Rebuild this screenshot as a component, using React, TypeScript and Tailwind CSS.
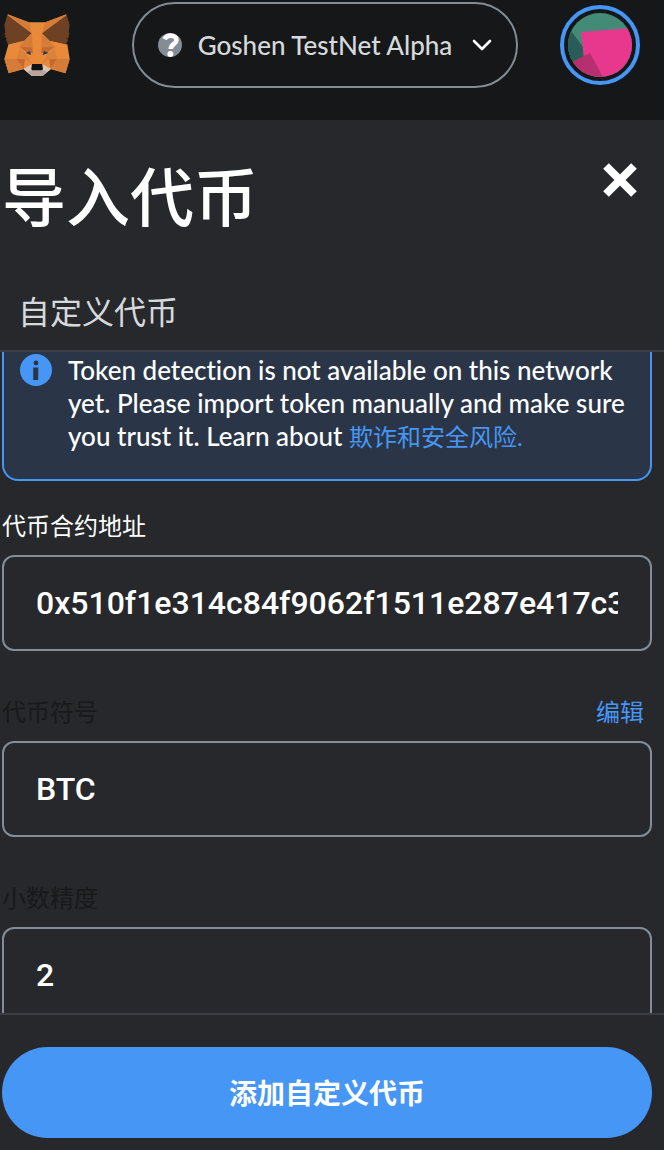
import React, { useState } from 'react';

const inputClass =
  'block h-24 w-full rounded-xl border-2 border-[#848c96] bg-transparent px-8 font-[Roboto,"Noto_Sans_CJK_SC",sans-serif] text-[32px] font-medium text-white outline-none focus:border-[#4696f6]';

const FoxLogo = () => (
  <svg className="h-[62px] w-[66px]" viewBox="12 42 196 186" aria-hidden="true">
    {/* head */}
    <path fill="#e88a3a" d="M22 43 84 67h52l62-24-4 90h7l7 45-12 41-45-12-25 20H94L70 207l-45 12-13-42 12-43z" />
    <path fill="#d57c38" d="m21 43 65 24 8 32zM199 43l-64 24-10 32z" />
    {/* ears */}
    <path fill="#6f4124" d="m21 45 73 55-22 22-48 12-7-14 2-6-6-3 3-5-4-3 3-6-3-22zM199 45l-74 55 22 22 49 12 7-14-2-6 6-3-3-5 4-3-3-6 3-22z" />
    {/* brow and cheeks */}
    <path fill="#e88a3a" d="m72 122-16 20-33-8zM147 122l18 20 35-8z" />
    <path fill="#d57c38" d="m72 122 22-22 4 40-42 2zM147 122l-22-22-2 40 42 2z" />
    <path fill="#d57c38" d="m12 176 38 1 20 30-45 13zM208 176l-38 1-20 30 45 13z" />
    <path fill="#dc813a" d="m58 143 20 22 18 27-22-14-25-1zM162 143l-20 22-18 27 23-14 23-1z" />
    <path fill="#c56932" d="m58 141 38 1 2 18-20-4zM162 141l-38 1-2 18 20-4z" />
    <path fill="#c56932" d="m49 177 25 1-4 28zM170 177l-23 1 3 28z" />
    {/* eyes */}
    <path fill="#293b50" d="m76 159 13-6 3 12zM145 159l-14-6-4 12z" />
    {/* muzzle */}
    <path fill="#d7c5b8" d="m69 207 25-14 1 18h30l2-18 25 14-25 21H94z" />
    <path fill="#baa59a" d="m82 215 12-5h32l13 5-13 13H94z" />
    <path fill="#111316" d="M95 192h30l3 15-3 4H95l-2-4z" />
  </svg>
);

const Avatar = () => (
  <svg className="size-16 rounded-full" viewBox="0 0 64 64" aria-hidden="true">
    <path fill="#438b76" d="M0 0h64v64H0z" />
    <path fill="#285d59" d="m4 19 11 15 1 10-16 8V25z" />
    <path fill="#e8388d" d="m13 19 51-4v49H18z" />
    <path fill="#b62f70" d="m4 49 18-9 14 26H0z" />
  </svg>
);

const QuestionIcon = () => (
  <svg className="size-6 shrink-0" viewBox="0 0 24 24" fill="none" aria-hidden="true">
    <circle cx="12" cy="12" r="12" fill="#848c96" />
    <path d="M6.500 6.200C7.800 3.800 9.800 2.600 12.500 2.600c3.400 0 6 1.600 6 4.400 0 4-5.600 3.800-5.800 9" stroke="#fff" strokeWidth="4.600" />
    <circle cx="12.400" cy="21" r="3" fill="#fff" />
  </svg>
);

const InfoIcon = () => (
  <svg className="size-8 shrink-0" viewBox="0 0 32 32" aria-hidden="true">
    <circle cx="16" cy="16" r="16" fill="#4696f6" />
    <circle cx="16" cy="9" r="2.400" fill="#2a3647" />
    <path fill="#2a3647" d="M13.200 13.500h5V26h-5z" />
  </svg>
);

const Header = () => (
  <header className="flex h-[120px] shrink-0 items-start justify-between bg-[#151718] pt-0.5 pr-6 pl-1">
    <a href="#home" aria-label="MetaMask" className="mt-3 mr-5">
      <FoxLogo />
    </a>
    <button type="button" className="flex h-[86px] items-center rounded-full border-2 border-[#848c96] px-6 text-[#d6d9dc]">
      <QuestionIcon />
      <span className="ml-4 text-[26px] leading-[33px] font-medium">Goshen TestNet Alpha</span>
      <svg className="ml-5 h-3 w-5" viewBox="0 0 20 12" fill="none" aria-hidden="true">
        <path d="m2 2 8 8 8-8" stroke="#fff" strokeWidth="2.600" strokeLinecap="round" strokeLinejoin="round" />
      </svg>
    </button>
    <button type="button" aria-label="Account" className="mt-[3px] rounded-full border-4 border-[#4696f6] p-1">
      <Avatar />
    </button>
  </header>
);

const App = () => {
  const [address, setAddress] = useState('0x510f1e314c84f9062f1511e287e417c38a9b02d1');
  const [symbol, setSymbol] = useState('BTC');
  const [decimals, setDecimals] = useState('2');

  return (
    <div className='flex h-screen flex-col bg-[#26282b] font-[Lato,"Noto_Sans_CJK_SC",sans-serif] text-white' lang="zh-CN">
      <Header />

      <div className="flex shrink-0 items-start justify-between pt-8 pr-6 pl-0.5">
        <h1 className="text-[64px] leading-[90px] font-medium">导入代币</h1>
        <button type="button" aria-label="关闭" className="mt-2">
          <svg className="size-10" viewBox="0 0 40 40" aria-hidden="true">
            <path d="m6 6 28 28M34 6 6 34" stroke="#fff" strokeWidth="8" />
          </svg>
        </button>
      </div>

      <div className="shrink-0 border-b-2 border-[#3b3e43] pt-[46px] pb-[14px] pl-[18px]">
        <button type="button" className="block text-[32px] leading-[48px] text-[#d6d9dc]">自定义代币</button>
      </div>

      {/* Scrollable form */}
      <main className="min-h-0 flex-1 overflow-y-auto pr-3 pl-0.5 [scrollbar-width:none]">
        <div className="flex gap-4 rounded-b-2xl border-2 border-t-0 border-[#4696f6] bg-[#2a3647] px-4 pt-0.5 pb-[26px]">
          <InfoIcon />
          <p className="text-[26px] leading-[33px] font-medium [font-variant-ligatures:none]">
            Token detection is not available on this network yet. Please import token manually and make sure you trust it. Learn about{' '}
            <a href="#security" className="text-[24px] font-normal text-[#4696f6]">欺诈和安全风险.</a>
          </p>
        </div>

        <div className="mt-7">
          <label htmlFor="address" className="mb-3 block text-[24px] leading-[34px]">代币合约地址</label>
          <input id="address" className={inputClass} value={address} onChange={(e) => setAddress(e.target.value)} />
        </div>

        <div className="mt-11">
          <div className="mb-3 flex justify-between pr-2 text-[24px] leading-[34px]">
            <label htmlFor="symbol" className="text-[#17191b]">代币符号</label>
            <button type="button" className="text-[#4696f6]">编辑</button>
          </div>
          <input id="symbol" className={inputClass} value={symbol} onChange={(e) => setSymbol(e.target.value)} />
        </div>

        <div className="mt-11">
          <label htmlFor="decimals" className="mb-3 block text-[24px] leading-[34px] text-[#17191b]">小数精度</label>
          <input id="decimals" className={inputClass} value={decimals} onChange={(e) => setDecimals(e.target.value)} />
        </div>
      </main>

      <footer className="shrink-0 border-t-2 border-[#3b3e43] pt-8 pr-3 pb-3 pl-0.5">
        <button type="button" className="h-[91px] w-full rounded-full bg-[#4696f6] text-[28px] font-bold">
          添加自定义代币
        </button>
      </footer>
    </div>
  );
};

export default App;
